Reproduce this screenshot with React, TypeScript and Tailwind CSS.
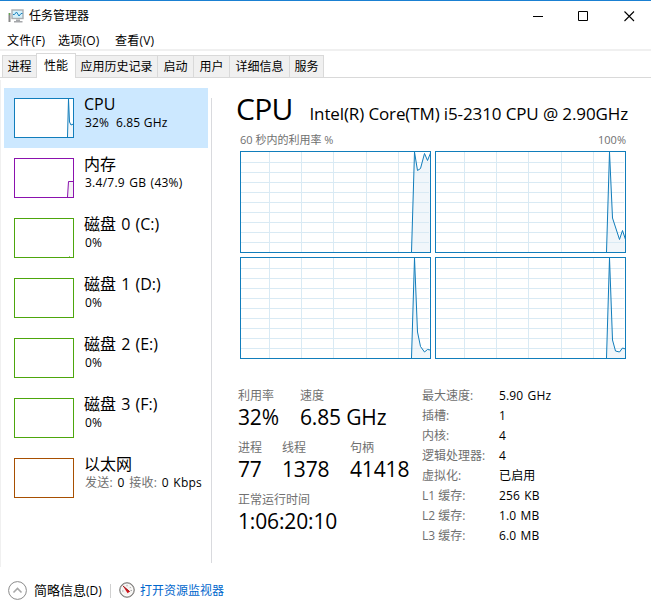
import { useState } from "react";
import clsx from "clsx";

type Point = [number, number];

const menus = [
  { label: "文件(F)", width: "w-[51px]" },
  { label: "选项(O)", width: "w-[57px]" },
  { label: "查看(V)", width: "w-[57px]" },
];

const tabs = [
  { label: "进程", width: "w-[34px]" },
  { label: "性能", width: "w-10" },
  { label: "应用历史记录", width: "w-[82px]" },
  { label: "启动", width: "w-9" },
  { label: "用户", width: "w-9" },
  { label: "详细信息", width: "w-[60px]" },
  { label: "服务", width: "w-[34px]" },
];

const resources = [
  { id: "cpu", title: "CPU", detail: "32%  6.85 GHz", color: "#117dbb" },
  { id: "mem", title: "内存", detail: "3.4/7.9 GB (43%)", color: "#8b12ae" },
  { id: "c", title: "磁盘 0 (C:)", detail: "0%", color: "#4da60c" },
  { id: "d", title: "磁盘 1 (D:)", detail: "0%", color: "#4da60c" },
  { id: "e", title: "磁盘 2 (E:)", detail: "0%", color: "#4da60c" },
  { id: "f", title: "磁盘 3 (F:)", detail: "0%", color: "#4da60c" },
  { id: "net", title: "以太网", detail: "", color: "#a74f01" },
];

const cores: Point[][] = [
  [[171.5, 101], [174.5, 1], [177.5, 19.5], [180.5, 17.5], [184.5, 2.5], [187.5, 9.5], [190.5, 2]],
  [[171.5, 101], [174.5, 1], [177.5, 67], [184.5, 88.5], [187.5, 79.5], [190.5, 88.5]],
  [[171.5, 101], [174.5, 1], [177.5, 75], [180.5, 89.5], [184.5, 95], [187.5, 92.5], [190.5, 93]],
  [[171.5, 101], [174.5, 1], [177.5, 83], [180.5, 94], [184.5, 95], [187.5, 91], [190.5, 92]],
];

const specs = [
  ["最大速度:", "5.90 GHz"],
  ["插槽:", "1"],
  ["内核:", "4"],
  ["逻辑处理器:", "4"],
  ["虚拟化:", "已启用"],
  ["L1 缓存:", "256 KB"],
  ["L2 缓存:", "1.0 MB"],
  ["L3 缓存:", "6.0 MB"],
];

const gridX = [29.5, 61.5, 93.5, 126.5, 158.5];
const gridY = [11.5, 21.5, 31.5, 41.5, 51.5, 61.5, 71.5, 81.5, 91.5];

function toPath(points: Point[]) {
  return points.map(([x, y]) => `${x},${y}`).join(" ");
}

function CoreGraph({ points }: { points: Point[] }) {
  return (
    <svg width="191" height="102" viewBox="0 0 191 102" className="block">
      <polygon points={`${toPath(points)} 190.5,101`} fill="#f1f6fa" />
      {gridX.map((x) => (
        <line key={x} x1={x} x2={x} y1="1" y2="101" stroke="#d9eaf4" />
      ))}
      {gridY.map((y) => (
        <line key={y} x1="1" x2="189" y1={y} y2={y} stroke="#d9eaf4" />
      ))}
      <polyline points={toPath(points)} fill="none" stroke="#117dbb" />
      <rect x="0.5" y="0.5" width="190" height="101" fill="none" stroke="#117dbb" />
    </svg>
  );
}

function Thumbnail({ id, color }: { id: string; color: string }) {
  return (
    <svg width="60" height="40" viewBox="0 0 60 40" className="block shrink-0">
      <rect x="0.5" y="0.5" width="59" height="39" fill="#fff" stroke={color} />
      {id === "cpu" && (
        <>
          <polygon points="53.5,39 54.5,1 55.5,24 59,26 59,39" fill="#f1f6fa" />
          <polyline points="53.5,39 54.5,1 55.5,24 57,27 59.5,26" fill="none" stroke={color} />
        </>
      )}
      {id === "mem" && (
        <>
          <polygon points="53.5,39 54.5,23.5 59,23.5 59,39" fill="#f4f2f4" />
          <polyline points="53.5,39 54.5,23.5 59.5,23.5" fill="none" stroke={color} />
        </>
      )}
      {id === "c" && <rect x="55" y="38" width="1" height="1" fill={color} opacity="0.6" />}
    </svg>
  );
}

function AppIcon() {
  return (
    <svg width="17" height="16" viewBox="0 0 17 16" className="block">
      <rect x="0.5" y="5" width="2" height="9" fill="#8a8a8a" />
      <rect x="1" y="5" width="1" height="2" fill="#5fae4b" />
      <rect x="4" y="2" width="11" height="8.5" fill="#d5f0fb" stroke="#a9adb1" strokeWidth="1.4" />
      <polyline points="5,6.5 6.5,6.5 8.5,4 11,8 13,5.5 14.5,5.5" fill="none" stroke="#1b82bd" />
      <path d="M8 11.5h4v1.5h2.5v1.5H6V13h2z" fill="#a6a8ab" />
    </svg>
  );
}

function GaugeIcon() {
  return (
    <svg width="17" height="17" viewBox="0 0 17 17" className="block">
      <circle cx="8" cy="8" r="7.3" fill="#c4c2c0" stroke="#7c7a78" />
      <circle cx="8" cy="8" r="5.8" fill="#f5f3f1" stroke="#fff" />
      <path d="M3.8 3.8l4.8 7.4 2.2-1.6z" fill="#d0141c" />
      <path d="M3.8 3.8l6.8 5.8" stroke="#a01216" />
      <path d="M8 2.8v1.5M11.8 5l-1 1M13 8.5h-1.5M3 9h1.5" stroke="#aaa" />
    </svg>
  );
}

function Stat({ label, value, className }: { label: string; value: string; className?: string }) {
  return (
    <div className={clsx("whitespace-nowrap", className)}>
      <div className="h-5 leading-5 text-[#707070]">{label}</div>
      <div className="h-6 text-[21px] leading-[22px] tracking-[-0.15px]">{value}</div>
    </div>
  );
}

export default function App() {
  const [tab, setTab] = useState("性能");
  const [selected, setSelected] = useState("cpu");

  return (
    <div className="flex h-[615px] w-[651px] flex-col overflow-hidden border-t border-[#1a80d2] bg-white font-['Open_Sans','Noto_Sans_CJK_SC',sans-serif] text-xs whitespace-pre text-black">
      <header className="flex h-[29px] shrink-0 items-center pl-2">
        <AppIcon />
        <h1 className="ml-1 leading-5">任务管理器</h1>
        <svg width="104" height="12" viewBox="0 0 104 12" className="mr-[14px] ml-auto block" fill="none" stroke="#000">
          <path d="M0 6.5h10M45.5 1.5h9v9h-9z" />
          <path d="M91.5 1.5l9.5 9.5M101 1.5L91.5 11" strokeWidth="1.1" />
        </svg>
      </header>

      <nav className="flex h-[19px] shrink-0 pl-[7px] leading-[21px]">
        {menus.map(({ label, width }) => (
          <button key={label} type="button" className={clsx("text-left tracking-[0.2px]", width)}>
            {label}
          </button>
        ))}
      </nav>
      <div className="h-0.5 shrink-0 bg-[#f0f0f0]" />

      <div className="flex h-[27px] shrink-0 items-end border-b border-[#d9d9d9] pl-0.5">
        {tabs.map(({ label, width }) => (
          <button
            key={label}
            type="button"
            onClick={() => setTab(label)}
            className={clsx(
              "shrink-0 border-[#d9d9d9]",
              width,
              tab === label
                ? "-mb-px h-[25px] border border-b-0 bg-white leading-[22px]"
                : "h-[22px] border-t border-r bg-[#f0f0f0] leading-[21px] first:border-r-0 first:border-l"
            )}
          >
            {label}
          </button>
        ))}
      </div>

      <main className="mt-0.5 flex h-[487px] shrink-0 border-l border-[#f0f0f0]">
        <aside className="mt-2 ml-[3px] w-[204px] shrink-0">
          {resources.map(({ id, title, detail, color }) => (
            <button
              key={id}
              type="button"
              onClick={() => setSelected(id)}
              className={clsx("flex h-[60px] w-full gap-2.5 pt-2.5 pl-2.5 text-left", selected === id && "bg-[#cce8ff]")}
            >
              <Thumbnail id={id} color={color} />
              <span className="-mt-1 block">
                <span className="block h-[21px] text-base leading-5 [word-spacing:1px]">{title}</span>
                {detail ? (
                  <span
                    className={clsx(
                      "block h-4 pl-px leading-4",
                      id === "mem" ? "tracking-[0.25px] [word-spacing:1px]" : "tracking-[0.2px]"
                    )}
                  >
                    {detail}
                  </span>
                ) : (
                  <span className="block h-4 pl-px leading-4 tracking-[0.25px] [word-spacing:1.2px]">
                    <span className="text-[#707070]">发送:</span> 0 <span className="text-[#707070]">接收:</span> 0 Kbps
                  </span>
                )}
              </span>
            </button>
          ))}
        </aside>
        <div className="mt-[18px] ml-[3px] h-[465px] w-px shrink-0 bg-[#d9dade]" />

        <section className="ml-6 w-[394px] shrink-0">
          <div className="flex h-[51px] items-baseline justify-between pt-[11px] pr-0.5">
            <h2 className="text-[30px] leading-9 tracking-[-0.7px]">CPU</h2>
            <span className="text-[17px] leading-6 tracking-[-0.12px]">Intel(R) Core(TM) i5-2310 CPU @ 2.90GHz</span>
          </div>
          <div className="mr-1 ml-1 flex h-5 justify-between text-[11px] leading-[18px] text-[#707070]">
            <span>60 秒内的利用率 %</span>
            <span>100%</span>
          </div>
          <div className="ml-1 grid w-[386px] grid-cols-2 gap-1">
            {cores.map((points, i) => (
              <CoreGraph key={i} points={points} />
            ))}
          </div>

          <div className="mt-[27px] flex pl-0.5">
            <div className="flex w-[184px] shrink-0 flex-col gap-2">
              <div className="flex">
                <Stat label="利用率" value="32%" className="w-[62px]" />
                <Stat label="速度" value="6.85 GHz" />
              </div>
              <div className="flex">
                <Stat label="进程" value="77" className="w-11" />
                <Stat label="线程" value="1378" className="w-[68px]" />
                <Stat label="句柄" value="41418" />
              </div>
              <Stat label="正常运行时间" value="1:06:20:10" />
            </div>
            <dl className="grid auto-rows-[20px] grid-cols-[77px_auto] leading-5">
              {specs.map(([name, value]) => (
                <div key={name} className="contents">
                  <dt className="text-[#707070]">{name}</dt>
                  <dd className="tracking-[0.15px] [word-spacing:1px]">{value}</dd>
                </div>
              ))}
            </dl>
          </div>
        </section>
      </main>

      <footer className="flex h-[47px] shrink-0 items-center pl-2">
        <svg width="20" height="20" viewBox="0 0 20 20" fill="none" className="block">
          <circle cx="9.5" cy="9.5" r="8.9" stroke="#8a8a8a" />
          <path d="M5.5 11.5l4-4 4 4" stroke="#a8a8a8" strokeWidth="1.6" />
        </svg>
        <button type="button" className="mb-0.5 ml-1.5 w-[76px] text-left text-[13px] leading-5">
          简略信息<span className="text-xs">(D)</span>
        </button>
        <div className="h-3.5 w-px bg-[#d0d0d0]" />
        <span className="ml-2">
          <GaugeIcon />
        </span>
        <a href="#" className="ml-1 leading-5 text-[#0066cc]">
          打开资源监视器
        </a>
      </footer>
    </div>
  );
}
